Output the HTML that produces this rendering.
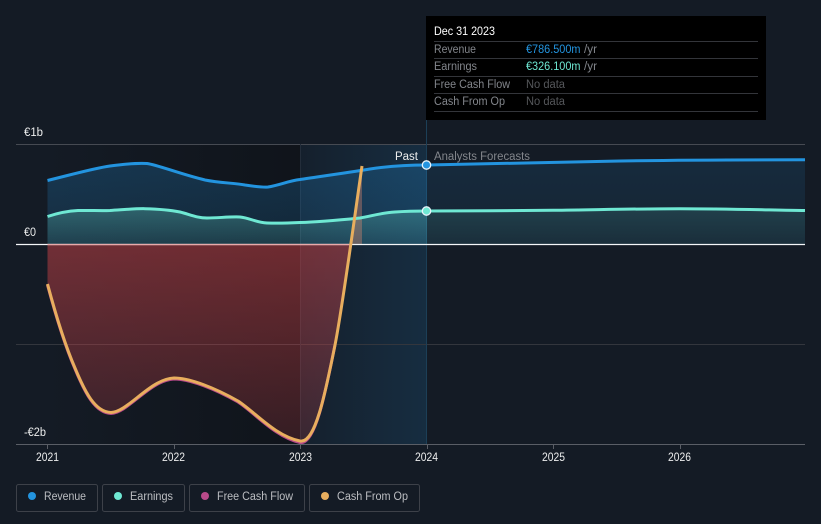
<!DOCTYPE html>
<html>
<head>
<meta charset="utf-8">
<style>
html,body{margin:0;padding:0;background:#141b25;width:821px;height:524px;overflow:hidden}
svg{display:block;font-family:"Liberation Sans",Arial,sans-serif;font-size:11.5px}
text{-webkit-font-smoothing:antialiased}
</style>
</head>
<body>
<svg width="821" height="524" viewBox="0 0 821 524" xmlns="http://www.w3.org/2000/svg">
<defs>
<clipPath id="cpast"><rect x="0" y="0" width="427" height="524"/></clipPath>
<clipPath id="cfut"><rect x="427" y="0" width="394" height="524"/></clipPath>
<linearGradient id="dark" gradientUnits="userSpaceOnUse" x1="47" y1="0" x2="300" y2="0">
<stop offset="0" stop-color="#0c0e12" stop-opacity="0"/>
<stop offset="1" stop-color="#0c0e12" stop-opacity=".55"/>
</linearGradient>
<linearGradient id="past" gradientUnits="userSpaceOnUse" x1="300" y1="0" x2="427" y2="0">
<stop offset="0" stop-color="#2394df" stop-opacity=".04"/>
<stop offset="1" stop-color="#2394df" stop-opacity=".15"/>
</linearGradient>
<linearGradient id="rev" gradientUnits="userSpaceOnUse" x1="0" y1="160" x2="0" y2="245">
<stop offset="0" stop-color="#2394df" stop-opacity=".24"/>
<stop offset="1" stop-color="#2394df" stop-opacity=".14"/>
</linearGradient>
<linearGradient id="revf" gradientUnits="userSpaceOnUse" x1="0" y1="160" x2="0" y2="245">
<stop offset="0" stop-color="#2394df" stop-opacity=".13"/>
<stop offset="1" stop-color="#2394df" stop-opacity=".07"/>
</linearGradient>
<linearGradient id="ear" gradientUnits="userSpaceOnUse" x1="0" y1="208" x2="0" y2="245">
<stop offset="0" stop-color="#6fe8d3" stop-opacity=".28"/>
<stop offset="1" stop-color="#6fe8d3" stop-opacity=".1"/>
</linearGradient>
<linearGradient id="earf" gradientUnits="userSpaceOnUse" x1="0" y1="208" x2="0" y2="245">
<stop offset="0" stop-color="#6fe8d3" stop-opacity=".13"/>
<stop offset="1" stop-color="#6fe8d3" stop-opacity=".05"/>
</linearGradient>
<linearGradient id="red" gradientUnits="userSpaceOnUse" x1="0" y1="245" x2="0" y2="444">
<stop offset="0" stop-color="#e2474b" stop-opacity=".45"/>
<stop offset="1" stop-color="#e2474b" stop-opacity=".17"/>
</linearGradient>
</defs>

<rect width="821" height="524" fill="#141b25"/>

<!-- shaded regions -->
<rect x="47" y="144" width="253" height="300" fill="url(#dark)"/>
<rect x="300" y="144" width="127" height="300" fill="url(#past)"/>

<!-- grid -->
<line x1="16" y1="144.500" x2="805" y2="144.500" stroke="#464a52"/>
<line x1="16" y1="344.500" x2="805" y2="344.500" stroke="#33363d"/>
<line x1="16" y1="444.500" x2="805" y2="444.500" stroke="#5a5e66"/>
<line x1="300.500" y1="144" x2="300.500" y2="444" stroke="#232d3a"/>
<line x1="426.500" y1="120" x2="426.500" y2="444" stroke="#1c3f57"/>

<!-- areas -->
<g clip-path="url(#cpast)">
<path d="M47.500 180.500C70 175 95 168 110 166C125 164 140 163 147 163.500C158 165 180 174 205 180C220 183 235 183 245 185C255 186.500 262 187.500 268 187C280 185 288 181 300 179.500C320 176.500 345 173 370 169C390 166 410 165 427 165V244.500H47.500Z" fill="url(#rev)"/>
<path d="M47.500 216.500C58 213 68 211 78 210.500C90 210.300 100 210.800 110 210.500C122 209.800 135 208.500 145 208.700C158 209 170 210 180 212C190 214.500 197 218 207 218C218 218 230 216.500 240 217C250 218 256 222.500 267 223C280 223.500 290 223 300 222.500C320 222 345 219.500 360 218C372 216 380 213 395 212C405 211.300 415 211 427 211V244.500H47.500Z" fill="url(#ear)"/>
</g>
<path d="M427 165C500 163 560 162 620 161C680 160 750 159.800 805 159.800V244.500H427Z" fill="url(#revf)"/>
<path d="M427 211C470 211 510 210.400 553 210.300C600 209.700 640 208.700 680 208.700C725 208.700 770 210 805 210.500V244.500H427Z" fill="url(#earf)"/>
<path d="M47.500 244.500V284C55 312 65 345 75 368C85 392 95 412 111 412.500C128 412 150 379 174 378C190 378 215 388 238 401C255 412 275 436 300 441C315 444 325 395 335 345C340 320 346 275 350 244.500Z" fill="url(#red)"/>
<path d="M350 244.500L362 166V244.500Z" fill="#e88a70" fill-opacity=".36"/>

<!-- zero line -->
<line x1="16" y1="244.500" x2="805" y2="244.500" stroke="#f4f6f8" stroke-width="1.200"/>
<line x1="47.500" y1="244.500" x2="350" y2="244.500" stroke="#e9aaaa" stroke-width="1.200"/>

<!-- lines -->
<path d="M47.500 180.500C70 175 95 168 110 166C125 164 140 163 147 163.500C158 165 180 174 205 180C220 183 235 183 245 185C255 186.500 262 187.500 268 187C280 185 288 181 300 179.500C320 176.500 345 173 370 169C390 166 410 165 427 165C500 163 560 162 620 161C680 160 750 159.800 805 159.800" fill="none" stroke="#2394df" stroke-width="3"/>
<path d="M47.500 216.500C58 213 68 211 78 210.500C90 210.300 100 210.800 110 210.500C122 209.800 135 208.500 145 208.700C158 209 170 210 180 212C190 214.500 197 218 207 218C218 218 230 216.500 240 217C250 218 256 222.500 267 223C280 223.500 290 223 300 222.500C320 222 345 219.500 360 218C372 216 380 213 395 212C405 211.300 415 211 427 211C470 211 510 210.400 553 210.300C600 209.700 640 208.700 680 208.700C725 208.700 770 210 805 210.500" fill="none" stroke="#6fe8d3" stroke-width="3"/>
<path d="M47.500 285C55 313 65 346 75 369C85 393 95 413 111 413.500C128 413 150 380 174 379C190 379 215 389 238 402C255 413 275 437 300 442.500C315 445 325 395 335 345" fill="none" stroke="#b84a8a" stroke-width="3"/>
<path d="M47.500 284C55 312 65 345 75 368C85 392 95 412 111 412.500C128 412 150 379 174 378C190 378 215 388 238 401C255 412 275 436 300 441C315 444 325 395 335 345C342 310 352 235 362 166" fill="none" stroke="#e8ae5e" stroke-width="3"/>

<!-- markers -->
<circle cx="426.500" cy="165" r="4.200" fill="#2394df" stroke="#e8f4fb" stroke-width="1.300"/>
<circle cx="426.500" cy="211" r="4.200" fill="#6fe8d3" stroke="#e8f4fb" stroke-width="1.300"/>

<!-- axis labels -->
<g fill="#eceded">
<text x="24" y="136" textLength="19" lengthAdjust="spacingAndGlyphs">€1b</text>
<text x="24" y="236" textLength="12" lengthAdjust="spacingAndGlyphs">€0</text>
<text x="24" y="436" textLength="22" lengthAdjust="spacingAndGlyphs">-€2b</text>
<text x="36" y="461" textLength="23" lengthAdjust="spacingAndGlyphs">2021</text>
<text x="162" y="461" textLength="23" lengthAdjust="spacingAndGlyphs">2022</text>
<text x="289" y="461" textLength="23" lengthAdjust="spacingAndGlyphs">2023</text>
<text x="415" y="461" textLength="23" lengthAdjust="spacingAndGlyphs">2024</text>
<text x="542" y="461" textLength="23" lengthAdjust="spacingAndGlyphs">2025</text>
<text x="668" y="461" textLength="23" lengthAdjust="spacingAndGlyphs">2026</text>
<text x="395" y="160" textLength="23" lengthAdjust="spacingAndGlyphs">Past</text>
</g>
<g stroke="#5a5e66">
<line x1="47.500" y1="444" x2="47.500" y2="449"/>
<line x1="174.500" y1="444" x2="174.500" y2="449"/>
<line x1="300.500" y1="444" x2="300.500" y2="449"/>
<line x1="427.500" y1="444" x2="427.500" y2="449"/>
<line x1="553.500" y1="444" x2="553.500" y2="449"/>
<line x1="680.500" y1="444" x2="680.500" y2="449"/>
</g>
<text x="434" y="160" fill="#83868c" textLength="96" lengthAdjust="spacingAndGlyphs">Analysts Forecasts</text>

<!-- tooltip -->
<rect x="426" y="16" width="340" height="104" fill="#000"/>
<g stroke="#33353a">
<line x1="434" y1="41.500" x2="758" y2="41.500"/>
<line x1="434" y1="58.500" x2="758" y2="58.500"/>
<line x1="434" y1="76.500" x2="758" y2="76.500"/>
<line x1="434" y1="93.500" x2="758" y2="93.500"/>
<line x1="434" y1="111.500" x2="758" y2="111.500"/>
</g>
<text x="434" y="35" fill="#fff" textLength="61" lengthAdjust="spacingAndGlyphs">Dec 31 2023</text>
<g fill="#83868c">
<text x="434" y="53" textLength="42" lengthAdjust="spacingAndGlyphs">Revenue</text>
<text x="434" y="70" textLength="43" lengthAdjust="spacingAndGlyphs">Earnings</text>
<text x="434" y="88" textLength="76" lengthAdjust="spacingAndGlyphs">Free Cash Flow</text>
<text x="434" y="105" textLength="71" lengthAdjust="spacingAndGlyphs">Cash From Op</text>
<text x="584" y="53" textLength="13" lengthAdjust="spacingAndGlyphs">/yr</text>
<text x="584" y="70" textLength="13" lengthAdjust="spacingAndGlyphs">/yr</text>
</g>
<text x="526" y="53" fill="#2394df" textLength="54.500" lengthAdjust="spacingAndGlyphs">€786.500m</text>
<text x="526" y="70" fill="#6fe8d3" textLength="54.500" lengthAdjust="spacingAndGlyphs">€326.100m</text>
<text x="526" y="88" fill="#55575b" textLength="39" lengthAdjust="spacingAndGlyphs">No data</text>
<text x="526" y="105" fill="#55575b" textLength="39" lengthAdjust="spacingAndGlyphs">No data</text>

<!-- legend -->
<g fill="none" stroke="#3d4149">
<rect x="16.500" y="484.500" width="81" height="27" rx="2"/>
<rect x="102.500" y="484.500" width="82" height="27" rx="2"/>
<rect x="189.500" y="484.500" width="115" height="27" rx="2"/>
<rect x="309.500" y="484.500" width="110" height="27" rx="2"/>
</g>
<circle cx="32" cy="496" r="4" fill="#2394df"/>
<circle cx="118" cy="496" r="4" fill="#6fe8d3"/>
<circle cx="205" cy="496" r="4" fill="#b84a8a"/>
<circle cx="325" cy="496" r="4" fill="#e8ae5e"/>
<g fill="#bcbec2">
<text x="44" y="500" textLength="42" lengthAdjust="spacingAndGlyphs">Revenue</text>
<text x="130" y="500" textLength="43" lengthAdjust="spacingAndGlyphs">Earnings</text>
<text x="217" y="500" textLength="76" lengthAdjust="spacingAndGlyphs">Free Cash Flow</text>
<text x="337" y="500" textLength="71" lengthAdjust="spacingAndGlyphs">Cash From Op</text>
</g>
</svg>
</body>
</html>
